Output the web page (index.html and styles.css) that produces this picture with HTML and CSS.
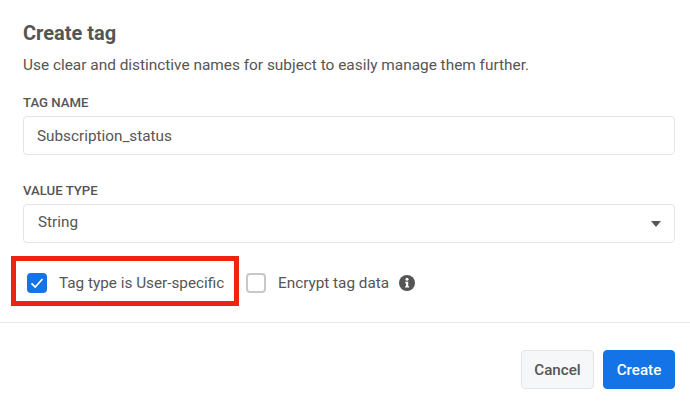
FILE: index.html
```html
<!DOCTYPE html>
<html lang="en">
<head>
  <meta charset="UTF-8">
  <title>Create tag</title>
  <link rel="stylesheet" href="styles.css">
</head>
<body>
  <div class="dialog">
    <div class="content">
      <h1 class="title">Create tag</h1>
      <p class="subtitle">Use clear and distinctive names for subject to easily manage them further.</p>

      <label class="label">TAG NAME</label>
      <div class="field">Subscription_status</div>

      <label class="label label-type">VALUE TYPE</label>
      <div class="field select">
        <span class="select-value">String</span>
        <span class="caret"></span>
      </div>

      <div class="options">
        <div class="check-row user-specific">
          <span class="box checked">
            <svg width="14" height="12" viewBox="0 0 14 12"><path d="M1.5 6.3 5.2 10 12.5 2" fill="none" stroke="#fff" stroke-width="1.7"/></svg>
          </span>
          <span>Tag type is User-specific</span>
          <div class="highlight"></div>
        </div>
        <div class="check-row encrypt">
          <span class="box"></span>
          <span>Encrypt tag data</span>
          <svg class="info" width="16" height="16" viewBox="0 0 16 16">
            <circle cx="8" cy="8" r="8" fill="#555"/>
            <circle cx="8" cy="4.2" r="1.5" fill="#fff"/>
            <path d="M6.2 6.8H9.2V11.2H10.2V12.6H6V11.2H7V8.2H6.2Z" fill="#fff"/>
          </svg>
        </div>
      </div>
    </div>

    <div class="footer">
      <button class="btn cancel">Cancel</button>
      <button class="btn create">Create</button>
    </div>
  </div>
</body>
</html>
```

FILE: styles.css
```css
body {
  margin: 0;
  background: #fff;
  font-family: Roboto, "Liberation Sans", sans-serif;
  color: #555;
}
.dialog {
  width: 690px;
  height: 402px;
  overflow: hidden;
}
.content {
  padding: 21px 15px 0 23px;
  height: 301px;
  border-bottom: 1px solid #e8e8e8;
}
.title {
  margin: 0;
  font-size: 20px;
  line-height: 24px;
  font-weight: 700;
  color: #555;
}
.subtitle {
  margin: 9px 0 0;
  font-size: 15.4px;
  line-height: 22px;
  color: #555;
}
.label {
  display: block;
  margin-top: 19px;
  font-size: 13.2px;
  line-height: 16px;
  font-weight: 500;
  color: #555;
}
.label-type {
  margin-top: 28px;
}
.field {
  box-sizing: border-box;
  height: 39px;
  margin-top: 5px;
  padding: 0 13px;
  display: flex;
  align-items: center;
  font-size: 15.3px;
  border: 1px solid #e4e4e4;
  border-radius: 4px;
  background: #fff;
}
.select {
  justify-content: space-between;
}
.select-value {
  margin: 0 0 4px 1px;
}
.caret {
  width: 0;
  height: 0;
  border-left: 5px solid transparent;
  border-right: 5px solid transparent;
  border-top: 6px solid #555;
}
.options {
  display: flex;
  align-items: center;
  margin-top: 30px;
  margin-left: 4px;
  font-size: 15.3px;
}
.check-row {
  display: flex;
  align-items: center;
  height: 20px;
}
.box {
  box-sizing: border-box;
  width: 20px;
  height: 20px;
  margin-right: 12px;
  display: flex;
  align-items: center;
  justify-content: center;
  border: 2px solid #c8c8c8;
  border-radius: 4px;
}
.box.checked {
  background: #1473e6;
  border-color: #1473e6;
}
.user-specific {
  position: relative;
  width: 198px;
}
.highlight {
  position: absolute;
  left: -16px;
  top: -17px;
  width: 218px;
  height: 40px;
  border: 5px solid #ee2310;
}
.encrypt {
  margin-left: 21px;
}
.info {
  margin-left: 10px;
}
.footer {
  display: flex;
  justify-content: flex-end;
  gap: 9px;
  padding: 27px 15px 0 0;
}
.btn {
  box-sizing: border-box;
  width: 73px;
  height: 39px;
  font-family: inherit;
  font-size: 15.2px;
  font-weight: 500;
  border-radius: 4px;
  border: 1px solid #e4e4e4;
}
.cancel {
  background: #f6f7f8;
  color: #555;
}
.create {
  width: 72px;
  background: #1473e6;
  border-color: #1473e6;
  color: #fff;
}
```
